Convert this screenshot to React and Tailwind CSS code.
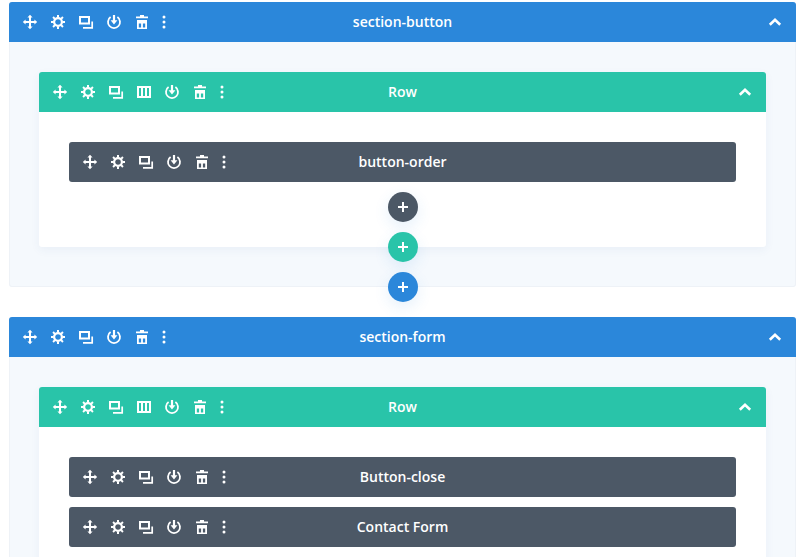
const MoveIcon = () => (
  <svg width="16" height="16" viewBox="0 0 16 16" fill="white">
    <path d="M7 3h2v4h4v2H9v4H7V9H3V7h4z" />
    <path d="M8 .8l2.600 2.800H5.400zM8 15.200l-2.600-2.800h5.200zM.8 8l2.800-2.600v5.200zM15.200 8l-2.800 2.600V5.400z" />
  </svg>
);

const GearIcon = () => (
  <svg width="16" height="16" viewBox="0 0 16 16" fill="none" stroke="white">
    <circle cx="8" cy="8" r="3.900" strokeWidth="2.200" />
    <path
      d="M8 1v2.500M8 12.500V15M1 8h2.500M12.500 8H15M3.050 3.050l1.800 1.800M11.150 11.150l1.800 1.800M3.050 12.950l1.800-1.800M11.150 4.850l1.800-1.800"
      strokeWidth="2"
    />
  </svg>
);

const CopyIcon = () => (
  <svg width="16" height="16" viewBox="0 0 16 16" fill="none" stroke="white">
    <rect x="2" y="3" width="9" height="6.500" strokeWidth="2" />
    <path d="M14.200 7.500v6.300H5" strokeWidth="1.700" />
  </svg>
);

const ColumnsIcon = () => (
  <svg width="16" height="16" viewBox="0 0 16 16" fill="none" stroke="white" strokeWidth="2">
    <rect x="2" y="3" width="12" height="10" />
    <path d="M6 3v10M10 3v10" />
  </svg>
);

const PowerIcon = () => (
  <svg width="16" height="16" viewBox="0 0 16 16" fill="none" stroke="white">
    <path d="M4.600 3.100a6 6 0 1 0 6.800 0" strokeWidth="1.800" />
    <path d="M8 1v6" strokeWidth="2.200" />
    <path d="M4.600 6.200h6.800L8 10.400z" fill="white" stroke="none" />
  </svg>
);

const TrashIcon = () => (
  <svg width="16" height="16" viewBox="0 0 16 16" fill="white" fillRule="evenodd">
    <path d="M6 1h4v1.500h4V4.300H2V2.500h4z" />
    <path d="M3 6h10v9H3zM4.800 9.500V13.400h2.300V9.500zM8.900 9.500V13.400h2.300V9.500z" />
  </svg>
);

const DotsIcon = () => (
  <svg width="4" height="16" viewBox="0 0 4 16" fill="white">
    <circle cx="2" cy="3" r="1.500" />
    <circle cx="2" cy="8" r="1.500" />
    <circle cx="2" cy="13" r="1.500" />
  </svg>
);

const ToolBtn = ({ children }) => (
  <span className="flex w-[28px] items-center justify-center">{children}</span>
);

const Bar = ({ title, color, columns, chevron, rounded }) => (
  <div className={`grid h-[40px] grid-cols-[1fr_auto_1fr] items-center text-white ${color} ${rounded}`}>
    <div className="flex items-center pl-[7px]">
      <ToolBtn><MoveIcon /></ToolBtn>
      <ToolBtn><GearIcon /></ToolBtn>
      <ToolBtn><CopyIcon /></ToolBtn>
      {columns && <ToolBtn><ColumnsIcon /></ToolBtn>}
      <ToolBtn><PowerIcon /></ToolBtn>
      <ToolBtn><TrashIcon /></ToolBtn>
      <span className="flex w-[15px] items-center justify-center"><DotsIcon /></span>
    </div>
    <div className="text-center text-[14px] font-semibold leading-[20px]">{title}</div>
    <div className="flex justify-end pr-[14px]">
      {chevron && (
        <svg width="14" height="10" viewBox="0 0 14 10" fill="none" stroke="white" strokeWidth="2.600">
          <path d="M1.800 7.800L7 2.800l5.200 5" />
        </svg>
      )}
    </div>
  </div>
);

const AddButton = ({ color, className }) => (
  <span className={`flex h-[30px] w-[30px] items-center justify-center rounded-full shadow-[0_5px_15px_rgba(43,135,218,0.12)] ${color} ${className}`}>
    <svg width="10" height="10" viewBox="0 0 10 10" stroke="white" strokeWidth="2">
      <path d="M5 0v10M0 5h10" />
    </svg>
  </span>
);

const Module = ({ title }) => (
  <Bar title={title} color="bg-[#4c5866]" rounded="rounded-[3px]" />
);

const Row = ({ children, addModule, addRow }) => (
  <div className="relative rounded-[3px] bg-white shadow-[0_3px_10px_rgba(43,87,151,0.06)]">
    <Bar title="Row" color="bg-[#29c4a9]" columns chevron rounded="rounded-t-[3px]" />
    <div className="flex flex-col gap-[10px] px-[30px] pt-[30px] pb-[25px]">
      {children}
      {addModule && <AddButton color="bg-[#4c5866]" className="self-center" />}
    </div>
    {addRow && <AddButton color="bg-[#29c4a9]" className="absolute -bottom-[15px] left-1/2 -translate-x-1/2" />}
  </div>
);

const Section = ({ title, children, addSection }) => (
  <div className="relative rounded-[3px] bg-[#f5f9fd] shadow-[inset_0_0_0_1px_#eef2f7]">
    <Bar title={title} color="bg-[#2b87da]" chevron rounded="rounded-t-[3px]" />
    <div className="px-[30px] pt-[30px] pb-[40px]">{children}</div>
    {addSection && <AddButton color="bg-[#2b87da]" className="absolute -bottom-[15px] left-1/2 -translate-x-1/2" />}
  </div>
);

export default function App() {
  return (
    <div className="h-[557px] overflow-hidden bg-white font-['Open_Sans',sans-serif]">
      <div className="flex flex-col gap-[30px] pt-[2px] pl-[9px] pr-[9px]">
        <Section title="section-button" addSection>
          <Row addModule addRow>
            <Module title="button-order" />
          </Row>
        </Section>
        <Section title="section-form">
          <Row>
            <Module title="Button-close" />
            <Module title="Contact Form" />
          </Row>
        </Section>
      </div>
    </div>
  );
}
